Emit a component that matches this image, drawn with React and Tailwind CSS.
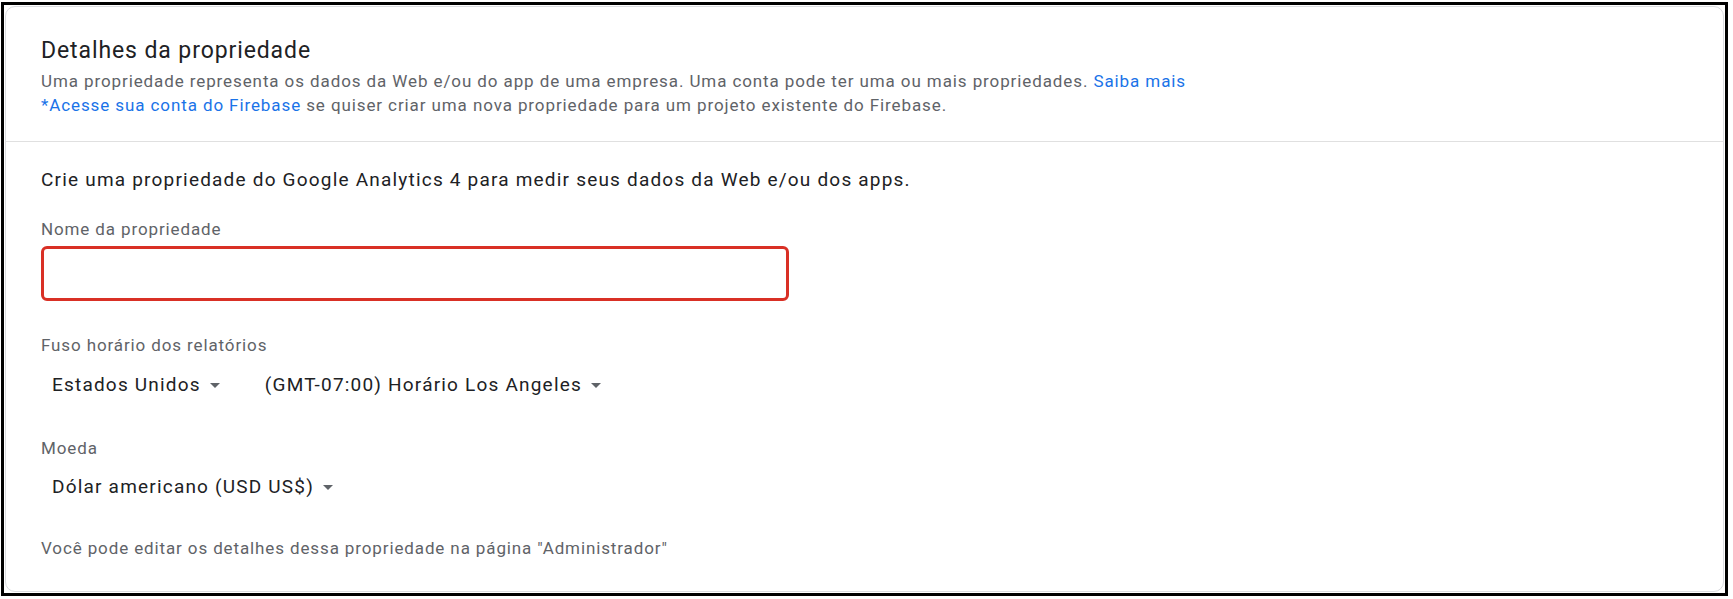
import React from 'react';

function Caret() {
  return (
    <svg width="10" height="5" viewBox="0 0 10 5" className="ml-[9px] shrink-0">
      <path d="M0 0h10L5 5z" fill="#5f6368" />
    </svg>
  );
}

function Select({ label }) {
  return (
    <button className="flex items-center px-[11px] text-[19px] leading-[24px] tracking-[1.2px] text-[#202124]">
      {label}
      <Caret />
    </button>
  );
}

export default function App() {
  return (
    <div className="h-[599px] w-[1733px] bg-white pb-[3px] pl-[1px] pr-[5px] pt-[2px] font-['Roboto',sans-serif]">
      <div className="h-full border-[3px] border-black p-[1px]">
        <div className="flex h-full flex-col rounded-[10px] border border-[#dadce0] bg-white">
          <div className="border-b border-[#e0e0e0] px-[35px] pb-[24px] pt-[30px]">
            <h1 className="text-[23px] leading-[28px] tracking-[0.9px] text-[#202124]">Detalhes da propriedade</h1>
            <p className="mt-[4px] text-[17px] leading-[24px] tracking-[0.9px] text-[#5f6368]">
              Uma propriedade representa os dados da Web e/ou do app de uma empresa. Uma conta pode ter uma ou mais
              propriedades. <a className="text-[#1a73e8]">Saiba mais</a>
            </p>
            <p className="text-[17px] leading-[24px] tracking-[0.9px] text-[#5f6368]">
              <a className="text-[#1a73e8]">*Acesse sua conta do Firebase</a> se quiser criar uma nova propriedade
              para um projeto existente do Firebase.
            </p>
          </div>

          <div className="flex flex-col px-[35px] pt-[26px]">
            <p className="text-[19px] leading-[24px] tracking-[1.2px] text-[#202124]">
              Crie uma propriedade do Google Analytics 4 para medir seus dados da Web e/ou dos apps.
            </p>

            <label className="mt-[27px] text-[17px] leading-[20px] tracking-[0.88px] text-[#5f6368]">
              Nome da propriedade
            </label>
            <input
              type="text"
              className="mt-[7px] h-[55px] w-[748px] rounded-[6px] border-[3px] border-[#d93025] px-3 text-[18px] outline-none"
            />

            <label className="mt-[34px] text-[17px] leading-[20px] tracking-[0.88px] text-[#5f6368]">
              Fuso horário dos relatórios
            </label>
            <div className="mt-[18px] flex items-center gap-[23px]">
              <Select label="Estados Unidos" />
              <Select label="(GMT-07:00) Horário Los Angeles" />
            </div>

            <label className="mt-[41px] text-[17px] leading-[20px] tracking-[0.88px] text-[#5f6368]">Moeda</label>
            <div className="mt-[17px] flex">
              <Select label="Dólar americano (USD US$)" />
            </div>

            <p className="mt-[39px] text-[17px] leading-[20px] tracking-[0.88px] text-[#5f6368]">
              Você pode editar os detalhes dessa propriedade na página "Administrador"
            </p>
          </div>
        </div>
      </div>
    </div>
  );
}
